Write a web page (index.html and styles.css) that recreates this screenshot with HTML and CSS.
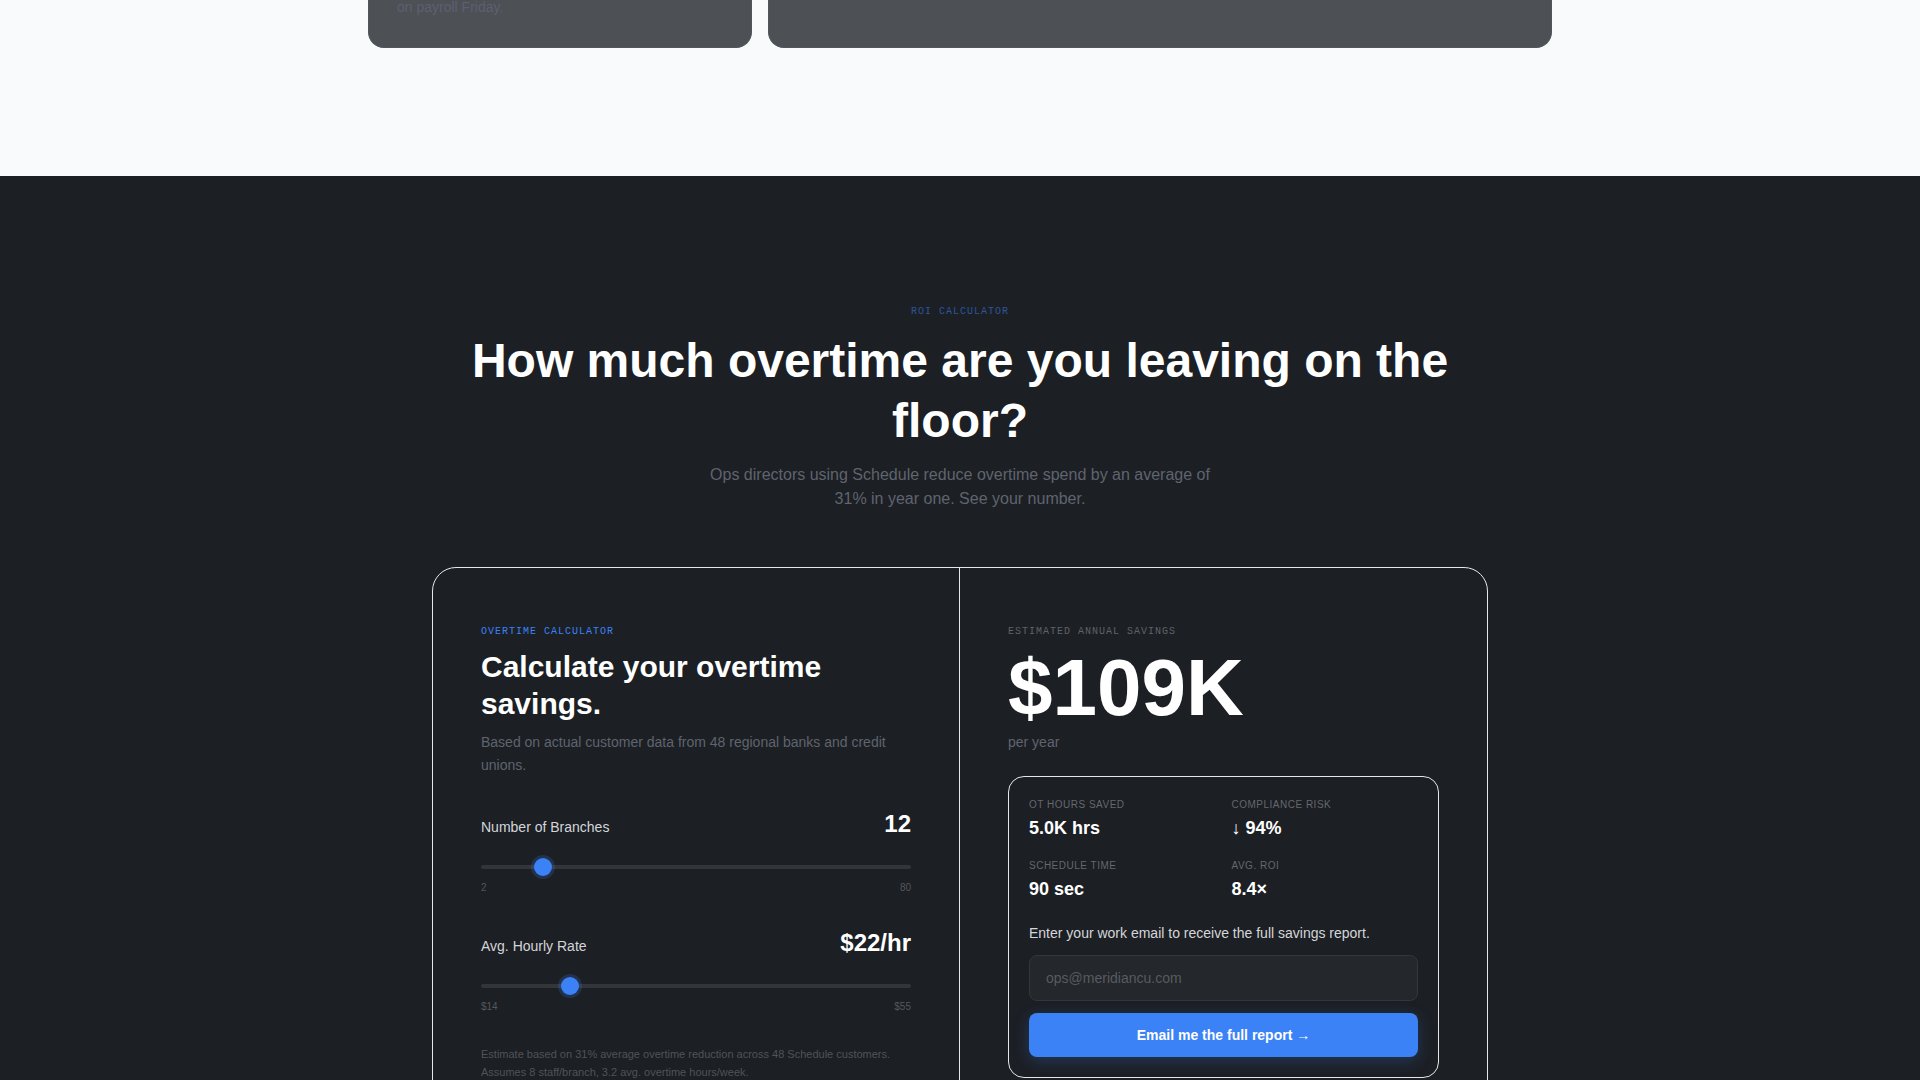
FILE: index.html
```html
<!DOCTYPE html>
<html lang="en">
<head>
<meta charset="utf-8">
<meta name="viewport" content="width=device-width, initial-scale=1">
<title>Schedule – ROI Calculator</title>
<link rel="stylesheet" href="styles.css">
</head>
<body>
<section class="features">
  <div class="features-grid">
    <article class="feature"><p class="feature-text">on payroll Friday.</p></article>
    <article class="feature feature-wide"></article>
  </div>
</section>

<section class="roi">
  <div class="roi-inner">
    <header class="roi-header">
      <p class="eyebrow eyebrow-dim">ROI Calculator</p>
      <h2 class="roi-title">How much overtime are you leaving on the floor?</h2>
      <p class="roi-lead">Ops directors using Schedule reduce overtime spend by an average of 31% in year one. See your number.</p>
    </header>

    <div class="calc">
      <div class="calc-inputs">
        <p class="eyebrow">Overtime Calculator</p>
        <h3 class="calc-title">Calculate your overtime savings.</h3>
        <p class="calc-text">Based on actual customer data from 48 regional banks and credit unions.</p>

        <div class="field">
          <div class="field-head">
            <label for="branches">Number of Branches</label>
            <output class="field-value" for="branches">12</output>
          </div>
          <input class="slider" type="range" id="branches" min="2" max="80" value="12">
          <div class="field-range"><span>2</span><span>80</span></div>
        </div>

        <div class="field">
          <div class="field-head">
            <label for="rate">Avg. Hourly Rate</label>
            <output class="field-value" for="rate">$22/hr</output>
          </div>
          <input class="slider" type="range" id="rate" min="14" max="55" value="22">
          <div class="field-range"><span>$14</span><span>$55</span></div>
        </div>

        <p class="calc-note">Estimate based on 31% average overtime reduction across 48 Schedule customers. Assumes 8 staff/branch, 3.2 avg. overtime hours/week.</p>
      </div>

      <div class="calc-results">
        <p class="eyebrow eyebrow-muted">Estimated Annual Savings</p>
        <p class="savings">$109K</p>
        <p class="savings-unit">per year</p>

        <form class="report">
          <dl class="stats">
            <div><dt>OT Hours Saved</dt><dd>5.0K hrs</dd></div>
            <div><dt>Compliance Risk</dt><dd>↓ 94%</dd></div>
            <div><dt>Schedule Time</dt><dd>90 sec</dd></div>
            <div><dt>Avg. ROI</dt><dd>8.4×</dd></div>
          </dl>
          <label class="report-label" for="email">Enter your work email to receive the full savings report.</label>
          <input class="report-input" type="email" id="email" placeholder="ops@meridiancu.com">
          <button class="report-button" type="submit">Email me the full report →</button>
        </form>
      </div>
    </div>
  </div>
</section>
</body>
</html>
```
FILE: styles.css
```css
*, *::before, *::after { box-sizing: border-box; }

body, h2, h3, p, dl, dd { margin: 0; }

body {
  background: #f8fafc;
  color: #fff;
  font-family: "Liberation Sans", Arial, sans-serif;
  font-size: 14px;
  line-height: 24px;
}

.features { padding: 0 48px 128px; }

.features-grid {
  display: grid;
  grid-template-columns: repeat(3, 1fr);
  gap: 16px;
  max-width: 1184px;
  margin: 0 auto;
}

.feature {
  min-height: 48px;
  padding: 0 28px 28px;
  border: 1px solid #54555d;
  border-top: 0;
  border-radius: 0 0 16px 16px;
  background: #4d5055;
}

.feature-wide { grid-column: span 2; }

.feature-text {
  color: #5b6070;
  line-height: 14px;
}

.roi {
  padding: 128px 48px;
  background: #1c1f24;
}

.roi-inner {
  max-width: 1056px;
  margin: 0 auto;
}

.roi-header {
  margin-bottom: 56px;
  text-align: center;
}

.eyebrow {
  color: #3b82f6;
  font-family: "Liberation Mono", "Courier New", monospace;
  font-size: 10px;
  line-height: 15px;
  letter-spacing: 1px;
  text-transform: uppercase;
}

.eyebrow-dim { color: #2c559a; }
.eyebrow-muted { color: #5f6268; }

.roi-title {
  margin-top: 12px;
  font-size: 48px;
  line-height: 60px;
}

.roi-lead {
  max-width: 520px;
  margin: 12px auto 0;
  color: #5f646e;
  font-size: 16px;
}

.calc {
  display: grid;
  grid-template-columns: 1fr 1fr;
  border: 1px solid #e5e7eb;
  border-radius: 24px;
}

.calc-inputs,
.calc-results { padding: 56px 48px; }

.calc-inputs { border-right: 1px solid #e5e7eb; }

.calc-title {
  margin-top: 9px;
  font-size: 30px;
  line-height: 37px;
}

.calc-text {
  margin-top: 9px;
  color: #5f646e;
  line-height: 23px;
}

.field { margin-top: 30px; }

.field-head {
  display: flex;
  align-items: baseline;
  justify-content: space-between;
  margin-bottom: 16px;
  color: #d4d6d9;
}

.calc-text + .field { margin-top: 29px; }

.field-value {
  color: #fff;
  font-size: 24px;
  font-weight: 700;
  line-height: 36px;
}

.slider {
  display: block;
  width: 100%;
  height: 18px;
  margin: 0;
  background: none;
  appearance: none;
}

.slider::-webkit-slider-runnable-track {
  height: 4px;
  border-radius: 2px;
  background: #333539;
}

.slider::-webkit-slider-thumb {
  width: 18px;
  height: 18px;
  margin-top: -7px;
  border-radius: 50%;
  background: #3b82f6;
  box-shadow: 0 0 0 3px rgba(59, 130, 246, 0.2);
  appearance: none;
}

.field-range {
  display: flex;
  justify-content: space-between;
  margin-top: 4px;
  color: #54575c;
  font-size: 10px;
  line-height: 15px;
}

.calc-note {
  margin-top: 31px;
  color: #505358;
  font-size: 11px;
  line-height: 18px;
}

.savings {
  margin-top: 9px;
  font-size: 80px;
  font-weight: 700;
  line-height: 80px;
}

.savings-unit {
  margin-top: 4px;
  color: #5f646e;
  line-height: 20px;
}

.report {
  margin-top: 24px;
  padding: 20px;
  border: 1px solid #e5e7eb;
  border-radius: 16px;
}

.stats {
  display: grid;
  grid-template-columns: 1fr 1fr;
  gap: 16px;
}

.stats dt {
  color: #65686e;
  font-size: 10px;
  line-height: 15px;
  letter-spacing: 0.5px;
  text-transform: uppercase;
}

.stats dd {
  margin-top: 3px;
  font-size: 18px;
  font-weight: 700;
  line-height: 27px;
}

.report-label {
  display: block;
  margin: 20px 0 12px;
  color: #d4d6d9;
  line-height: 20px;
}

.report-input {
  display: block;
  width: 100%;
  height: 46px;
  padding: 0 16px;
  border: 1px solid #34363b;
  border-radius: 8px;
  background: #24272b;
  color: #fff;
  font: inherit;
}

.report-input::placeholder { color: #585b60; }

.report-button {
  display: block;
  width: 100%;
  height: 44px;
  margin-top: 12px;
  border: 0;
  border-radius: 8px;
  background: #3b82f6;
  box-shadow: 0 4px 16px rgba(59, 130, 246, 0.25);
  color: #fff;
  font: inherit;
  font-weight: 700;
}
```
